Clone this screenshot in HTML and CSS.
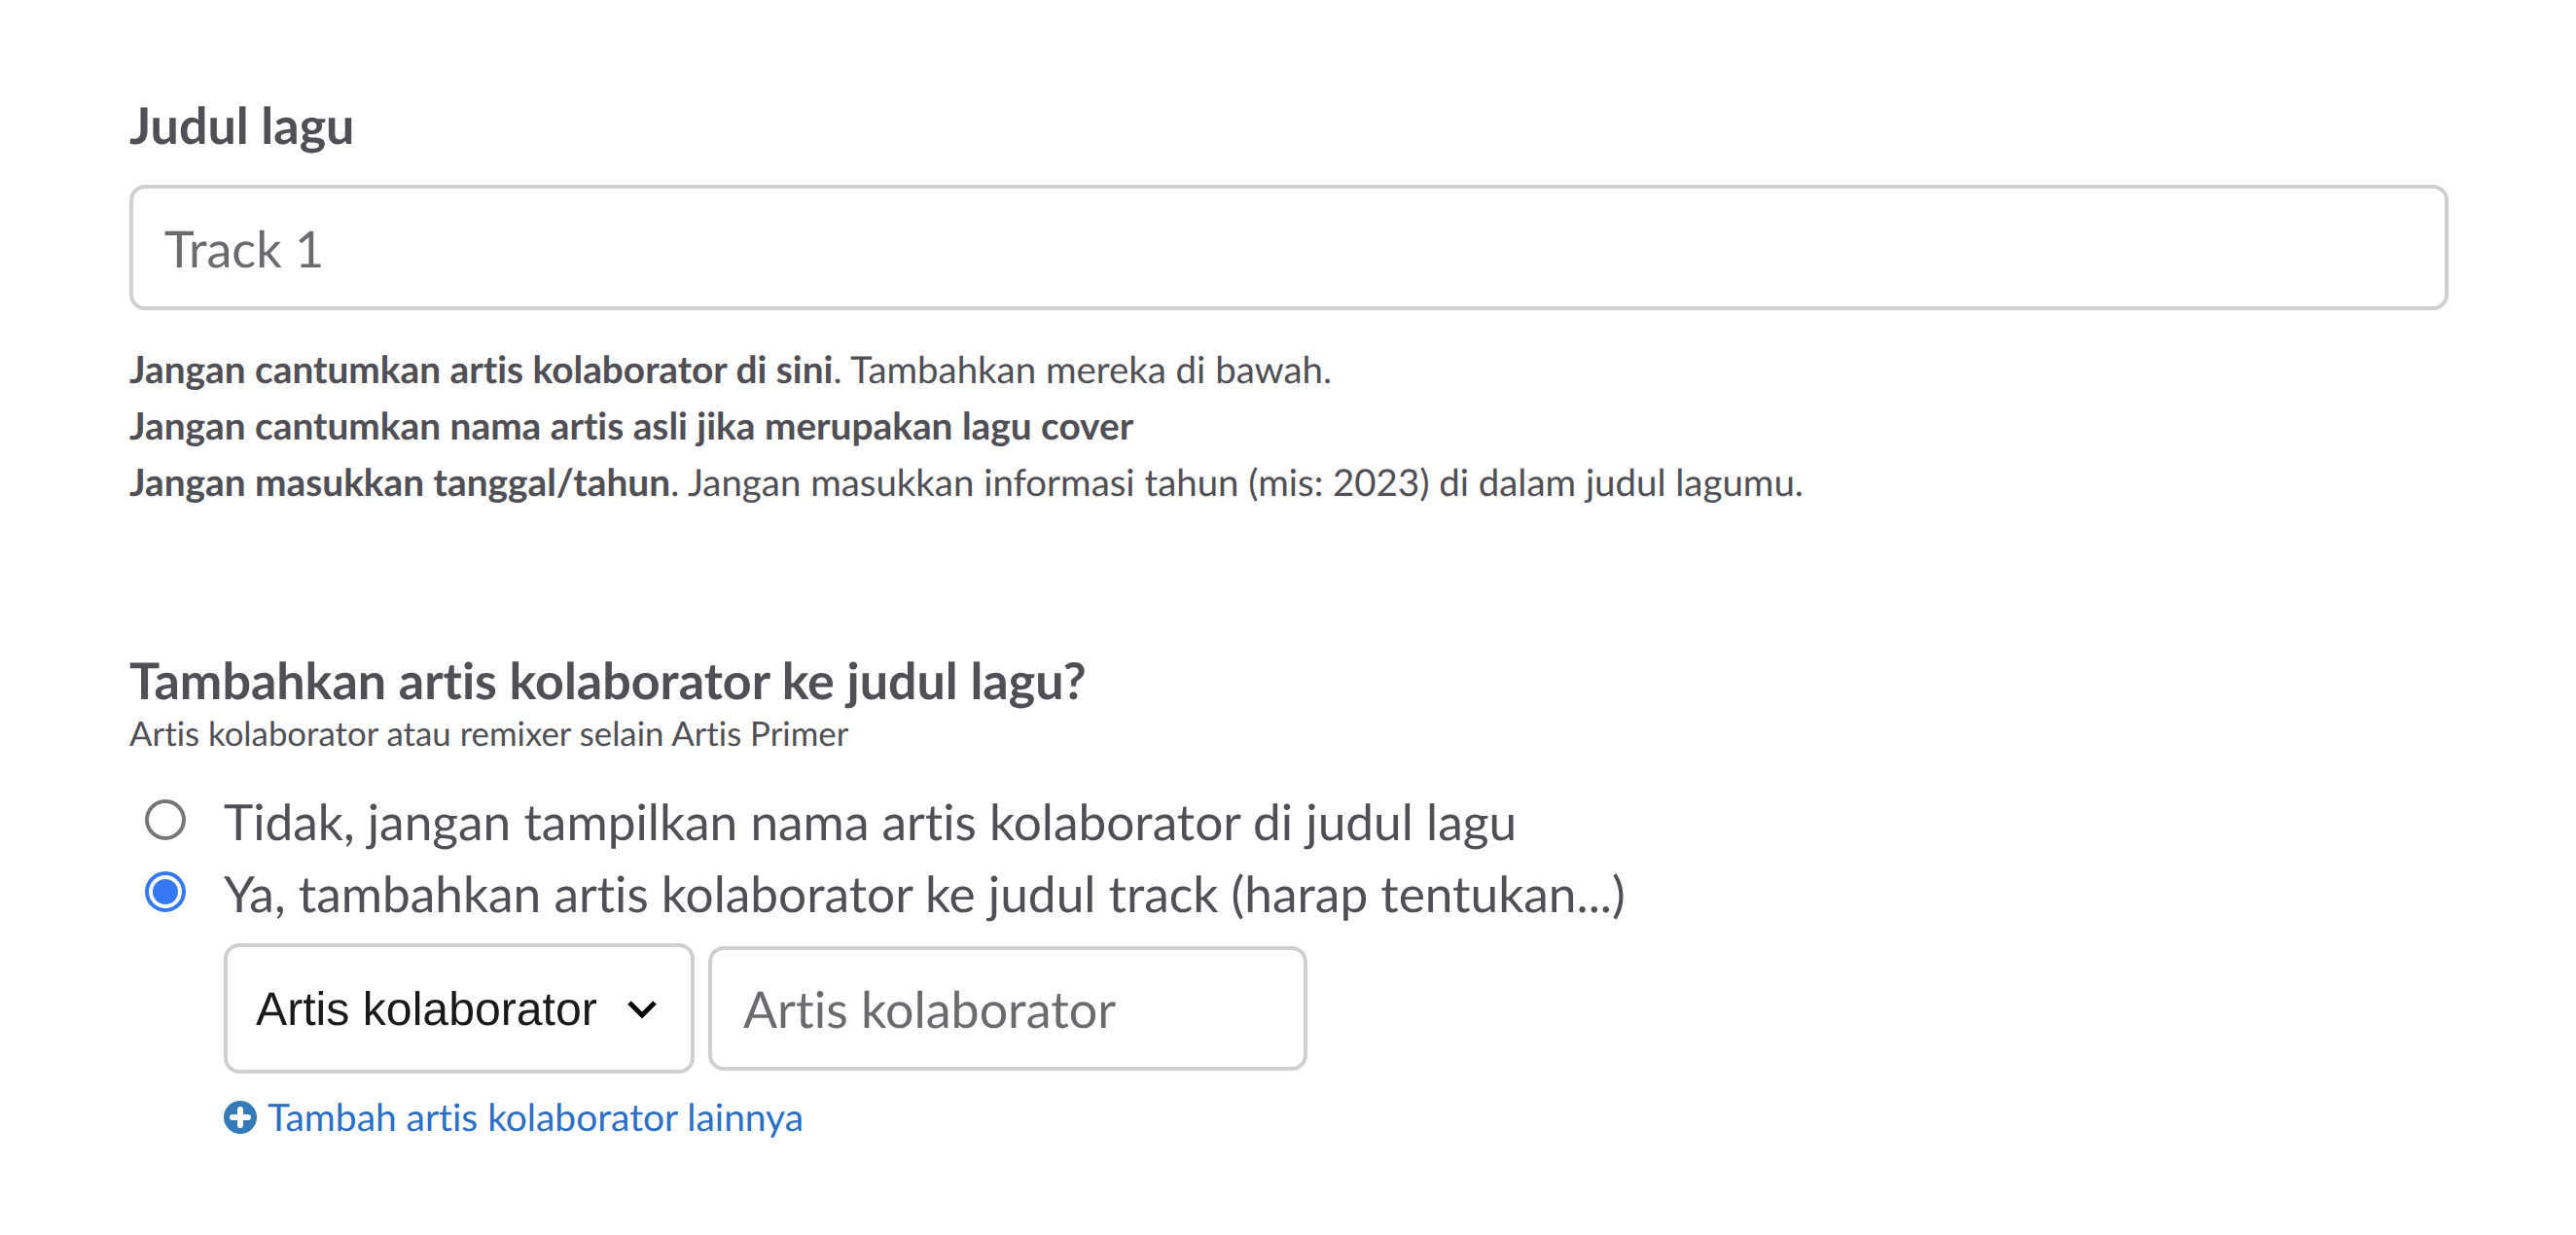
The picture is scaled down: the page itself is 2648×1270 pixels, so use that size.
FILE: index.html
```html
<!DOCTYPE html>
<html lang="id">
<head>
<meta charset="utf-8">
<title>Judul lagu</title>
<link rel="stylesheet" href="styles.css">
</head>
<body>
<main class="form">
  <section class="title-section">
    <h2 class="heading">Judul lagu</h2>
    <input class="field field-wide" type="text" placeholder="Track 1">
    <div class="help">
      <p><strong>Jangan cantumkan artis kolaborator di sini</strong>. Tambahkan mereka di bawah.</p>
      <p><strong>Jangan cantumkan nama artis asli jika merupakan lagu cover</strong></p>
      <p><strong>Jangan masukkan tanggal/tahun</strong>. Jangan masukkan informasi tahun (mis: 2023) di dalam judul lagumu.</p>
    </div>
  </section>
  <section class="collab-section">
    <h2 class="heading">Tambahkan artis kolaborator ke judul lagu?</h2>
    <p class="sub">Artis kolaborator atau remixer selain Artis Primer</p>
    <div class="options">
      <div class="option"><span class="radio"></span><span>Tidak, jangan tampilkan nama artis kolaborator di judul lagu</span></div>
      <div class="option"><span class="radio radio-on"></span><span>Ya, tambahkan artis kolaborator ke judul track (harap tentukan...)</span></div>
    </div>
    <div class="collab-body">
      <div class="collab-row">
        <div class="select">
          <span>Artis kolaborator</span>
          <svg class="chevron" viewBox="0 0 32 20" width="32" height="20"><path d="M3 3 L16 16 L29 3" fill="none" stroke="#000" stroke-width="5"/></svg>
        </div>
        <input class="field field-name" type="text" placeholder="Artis kolaborator">
      </div>
      <a class="add-link" href="#">
        <svg class="plus" viewBox="0 0 34 34" width="34" height="34"><circle cx="17" cy="17" r="17" fill="#337ab7"/><path d="M17 9 V25 M9 17 H25" stroke="#fff" stroke-width="6" stroke-linecap="round"/></svg>
        <span>Tambah artis kolaborator lainnya</span>
      </a>
    </div>
  </section>
</main>
</body>
</html>
```
FILE: styles.css
```css
* { box-sizing: border-box; }
html, body { margin: 0; background: #fff; }
body {
  font-family: "Lato", sans-serif;
  font-variant-ligatures: none;
  text-rendering: geometricPrecision;
  color: #4f4f55;
}
.form { padding: 102px 131px 0 133px; }
.heading {
  margin: 0;
  font-size: 52px;
  line-height: 54px;
  font-weight: 700;
}
.field {
  display: block;
  background: #fff;
  border: 4px solid #cfcfcf;
  border-radius: 16px;
  font-family: "Lato", sans-serif;
  font-variant-ligatures: none;
  text-rendering: geometricPrecision;
  font-size: 52px;
  color: #4f4f55;
  outline: none;
}
.field::placeholder { color: #6b6b6f; opacity: 1; }
.field-wide {
  width: 100%;
  height: 129px;
  margin-top: 34px;
  padding: 2px 32px 0;
}
.help {
  margin-top: 32px;
  font-size: 38.4px;
  line-height: 58px;
}
.help p { margin: 0; }
.help strong { font-size: 38.8px; font-weight: 700; }
.collab-section { margin-top: 148px; }
.sub {
  margin: 7px 0 0;
  font-size: 34.8px;
  line-height: 42px;
}
.options { margin-top: 31px; }
.option {
  display: flex;
  align-items: center;
  gap: 39px;
  height: 74px;
  padding-left: 16px;
  font-size: 51.4px;
}
.radio {
  flex: none;
  width: 42px;
  height: 42px;
  margin-top: -3px;
  border: 4px solid #767676;
  border-radius: 50%;
  background: #fff;
}
.radio-on {
  border-color: #3478f6;
  padding: 4px;
  background: #3478f6 content-box;
}
.collab-body { padding-left: 97px; }
.collab-row {
  display: flex;
  align-items: center;
  gap: 14px;
  margin-top: 15px;
}
.select {
  display: flex;
  align-items: center;
  justify-content: space-between;
  width: 484px;
  height: 134px;
  padding: 2px 34px 0 29px;
  border: 4px solid #cfcfcf;
  border-radius: 16px;
  font-family: "Liberation Sans", sans-serif;
  font-size: 48.2px;
  color: #1a1a1a;
}
.chevron { display: block; }
.field-name {
  width: 616px;
  height: 128px;
  padding: 2px 32px 0;
}
.add-link {
  display: flex;
  align-items: center;
  gap: 11px;
  margin-top: 23px;
  font-size: 38.9px;
  line-height: 44px;
  color: #2a6fc4;
  text-decoration: none;
}
.plus { flex: none; display: block; }
```
